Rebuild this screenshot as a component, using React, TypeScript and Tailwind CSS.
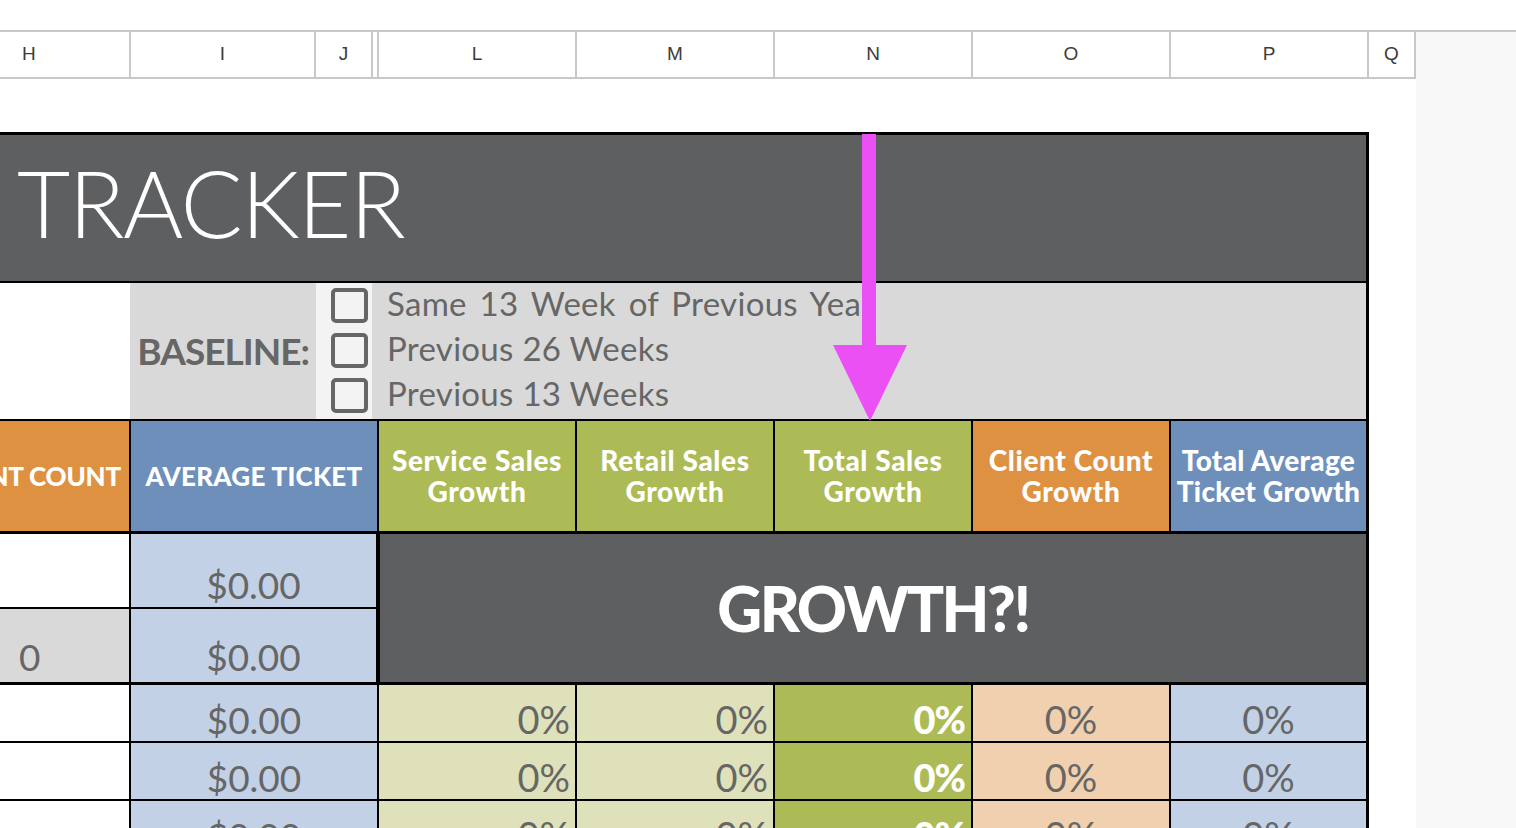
const COLS = [
  { l: "H", w: "w-[131px]", pad: "justify-start pl-[22px]" },
  { l: "I", w: "w-[185px]", pad: "justify-center" },
  { l: "J", w: "w-[57px]", pad: "justify-center" },
  { l: "", w: "w-[6px]", pad: "justify-center" },
  { l: "L", w: "w-[198px]", pad: "justify-center" },
  { l: "M", w: "w-[198px]", pad: "justify-center" },
  { l: "N", w: "w-[198px]", pad: "justify-center" },
  { l: "O", w: "w-[198px]", pad: "justify-center" },
  { l: "P", w: "w-[198px]", pad: "justify-center" },
  { l: "Q", w: "w-[47px]", pad: "justify-center" },
];

const font = "font-['Lato','Noto_Sans',sans-serif]";

function Checkbox() {
  return <div className="h-[35px] w-[37px] rounded-[5px] border-[4px] border-[#666666]" />;
}

function DataRow() {
  return (
    <div className="flex h-[58px] border-b-2 border-black">
      <div className="w-[131px] border-r-2 border-black bg-white" />
      <div className="flex w-[248px] items-end justify-center border-r-2 border-black bg-[#c3d1e7] pb-[3px]">
        <span className="text-[37px] leading-none text-[#666666]">$0.00</span>
      </div>
      <div className="flex w-[198px] items-end justify-end border-r-2 border-black bg-[#dee1b9] pb-[3px] pr-[5px]">
        <span className="text-[38px] leading-none text-[#666666]">0%</span>
      </div>
      <div className="flex w-[198px] items-end justify-end border-r-2 border-black bg-[#dee1b9] pb-[3px] pr-[5px]">
        <span className="text-[38px] leading-none text-[#666666]">0%</span>
      </div>
      <div className="flex w-[198px] items-end justify-end border-r-2 border-black bg-[#adbb56] pb-[3px] pr-[6px]">
        <span className="text-[38px] font-black leading-none tracking-[-1px] text-white">0%</span>
      </div>
      <div className="flex w-[198px] items-end justify-center border-r-2 border-black bg-[#f0d0ae] pb-[3px]">
        <span className="text-[38px] leading-none text-[#666666]">0%</span>
      </div>
      <div className="flex w-[195px] items-end justify-center bg-[#c3d1e7] pb-[3px]">
        <span className="text-[38px] leading-none text-[#666666]">0%</span>
      </div>
    </div>
  );
}

export default function App() {
  return (
    <div className={`relative h-[828px] w-[1516px] overflow-hidden bg-white ${font}`}>
      <div className="h-[30px]" />
      <div className="flex h-[798px] border-t-2 border-[#c8c8c8]">
        <div className="w-[1416px]">
          {/* column letters */}
          <div className="flex h-[47px] border-b-2 border-[#c8c8c8] font-['Liberation_Sans',Arial,sans-serif] text-[19px] text-[#3c3c3c]">
            {COLS.map((c, i) => (
              <div key={i} className={`flex items-center border-r-2 border-[#c8c8c8] ${c.w} ${c.pad}`}>
                {c.l}
              </div>
            ))}
          </div>
          <div className="h-[53px]" />

          {/* sheet */}
          <div className="w-[1369px] border-r-[3px] border-t-[3px] border-black">
            <div className="flex h-[148px] items-center border-b-2 border-black bg-[#5e5f61] pb-[10px] pl-[17px]">
              <span className="text-[92px] font-light leading-none tracking-[-1.5px] text-white">TRACKER</span>
            </div>

            <div className="flex h-[138px] border-b-2 border-black">
              <div className="w-[130px] bg-white" />
              <div className="flex w-[186px] items-center justify-end bg-[#d9d9d9] pr-[7px]">
                <span className="text-[37px] font-bold tracking-[-1px] text-[#666666]">BASELINE:</span>
              </div>
              <div className="flex w-[56px] flex-col gap-[10px] bg-[#f3f3f3] pl-[15px] pt-[5px]">
                <Checkbox />
                <Checkbox />
                <Checkbox />
              </div>
              <div className="flex flex-1 flex-col whitespace-nowrap bg-[#d9d9d9] pl-[15px] text-[33px] leading-[45px] tracking-[0.3px] text-[#666666]">
                <span className="-mt-[2px] [word-spacing:4px]">Same 13 Week of Previous Year</span>
                <span>Previous 26 Weeks</span>
                <span>Previous 13 Weeks</span>
              </div>
            </div>

            <div className="flex h-[113px] border-b-[3px] border-black text-[28px] font-black leading-[31px] tracking-[0.6px] text-white">
              <div className="flex w-[131px] items-center justify-end overflow-hidden whitespace-nowrap border-r-2 border-black bg-[#df9142] pr-[8px] text-[26px] tracking-[-0.2px]">
                CLIENT COUNT
              </div>
              <div className="flex w-[248px] items-center justify-center border-r-2 border-black bg-[#6f8fbb] text-[26px] tracking-[0.3px]">
                AVERAGE TICKET
              </div>
              <div className="flex w-[198px] items-center justify-center border-r-2 border-black bg-[#adbb56] text-center">
                Service Sales<br />Growth
              </div>
              <div className="flex w-[198px] items-center justify-center border-r-2 border-black bg-[#adbb56] text-center">
                Retail Sales<br />Growth
              </div>
              <div className="flex w-[198px] items-center justify-center border-r-2 border-black bg-[#adbb56] text-center">
                Total Sales<br />Growth
              </div>
              <div className="flex w-[198px] items-center justify-center border-r-2 border-black bg-[#df9142] text-center">
                Client Count<br />Growth
              </div>
              <div className="flex w-[195px] items-center justify-center whitespace-nowrap bg-[#6f8fbb] text-center tracking-[0.3px]">
                Total Average<br />Ticket Growth
              </div>
            </div>

            <div className="flex h-[151px] border-b-[3px] border-black">
              <div className="flex w-[380px] flex-col border-r-4 border-black">
                <div className="flex h-[75px] border-b-2 border-black">
                  <div className="w-[131px] border-r-2 border-black bg-white" />
                  <div className="flex flex-1 items-end justify-center bg-[#c3d1e7] pb-[4px]">
                    <span className="text-[37px] leading-none text-[#666666]">$0.00</span>
                  </div>
                </div>
                <div className="flex h-[73px]">
                  <div className="flex w-[131px] items-end border-r-2 border-black bg-[#d9d9d9] pb-[7px] pl-[19px]">
                    <span className="text-[37px] leading-none text-[#666666]">0</span>
                  </div>
                  <div className="flex flex-1 items-end justify-center bg-[#c3d1e7] pb-[7px]">
                    <span className="text-[37px] leading-none text-[#666666]">$0.00</span>
                  </div>
                </div>
              </div>
              <div className="flex flex-1 items-center justify-center bg-[#5e5f61]">
                <span className="text-[62px] font-black leading-none tracking-[-2.5px] text-white">GROWTH?!</span>
              </div>
            </div>

            <DataRow />
            <DataRow />
            <DataRow />
          </div>
        </div>
        <div className="flex-1 bg-[#f7f8f7]" />
      </div>

      {/* annotation arrow */}
      <svg className="absolute left-[833px] top-[134px]" width="74" height="287" viewBox="0 0 74 287">
        <rect x="29" y="0" width="14" height="214" fill="#ea50f3" />
        <polygon points="0,211 74,211 37,287" fill="#ea50f3" />
      </svg>
    </div>
  );
}
